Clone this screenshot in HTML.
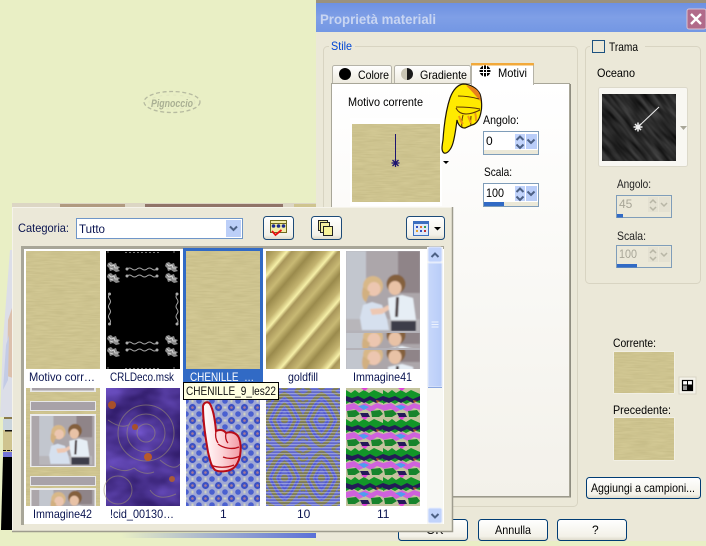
<!DOCTYPE html>
<html><head><meta charset="utf-8"><title>Proprietà materiali</title>
<style>
html,body{margin:0;padding:0;background:#e9efc5;width:706px;height:546px;overflow:hidden}
svg{display:block;position:absolute;left:0;top:0}
text{font-family:"Liberation Sans",sans-serif;font-size:12px;fill:#000;white-space:pre}
.n{fill:#0a1450}
</style></head><body>
<svg width="706" height="546" viewBox="0 0 706 546" xmlns="http://www.w3.org/2000/svg">
<defs>
<filter id="grain" x="0" y="0" width="100%" height="100%" color-interpolation-filters="sRGB">
<feTurbulence type="fractalNoise" baseFrequency="0.06 0.7" numOctaves="2" seed="3"/>
<feColorMatrix type="matrix" values=".08 0 0 0 .765  .08 0 0 0 .725  .08 0 0 0 .52  0 0 0 0 1"/>
</filter>
<filter id="dark" x="0" y="0" width="100%" height="100%" color-interpolation-filters="sRGB">
<feTurbulence type="fractalNoise" baseFrequency="0.035 0.2" numOctaves="2" seed="5"/>
<feColorMatrix type="matrix" values=".32 0 0 0 0  .32 0 0 0 0  .32 0 0 0 0  0 0 0 0 1"/>
</filter>
<filter id="purple" x="0" y="0" width="100%" height="100%" color-interpolation-filters="sRGB">
<feTurbulence type="fractalNoise" baseFrequency="0.025 0.04" numOctaves="3" seed="8"/>
<feColorMatrix type="matrix" values=".4 0 0 0 .1  .35 0 0 0 .03  .6 0 0 0 .28  0 0 0 0 1"/>
</filter>
<filter id="photo" x="0" y="0" width="100%" height="100%"><feGaussianBlur stdDeviation="0.8"/></filter>
<linearGradient id="title" x1="0" x2="0" y1="0" y2="1"><stop offset="0" stop-color="#6d90e2"/><stop offset=".5" stop-color="#7f9fe6"/><stop offset="1" stop-color="#7397e4"/></linearGradient>
<linearGradient id="page" x1="0" x2="0" y1="0" y2="1"><stop offset="0" stop-color="#ffffff"/><stop offset="1" stop-color="#f3f1ea"/></linearGradient>
<linearGradient id="btn" x1="0" x2="0" y1="0" y2="1"><stop offset="0" stop-color="#ffffff"/><stop offset=".8" stop-color="#f3f1e8"/><stop offset="1" stop-color="#dcd8c8"/></linearGradient>
<linearGradient id="tab" x1="0" x2="0" y1="0" y2="1"><stop offset="0" stop-color="#ffffff"/><stop offset="1" stop-color="#ece9dc"/></linearGradient>
<linearGradient id="sb" x1="0" x2="1" y1="0" y2="0"><stop offset="0" stop-color="#c8d8fb"/><stop offset="1" stop-color="#b8ccf8"/></linearGradient>
<linearGradient id="gold" gradientUnits="userSpaceOnUse" x1="266" y1="251" x2="293" y2="274" spreadMethod="repeat">
<stop offset="0" stop-color="#9a8a4c"/><stop offset=".3" stop-color="#c4b470"/><stop offset=".46" stop-color="#f6f0a8"/><stop offset=".56" stop-color="#a8965a"/><stop offset=".8" stop-color="#c8b974"/><stop offset="1" stop-color="#9a8a4c"/></linearGradient>
<linearGradient id="bl" x1="0" x2="1" y1="0" y2="0"><stop offset="0" stop-color="#e9efc5"/><stop offset="1" stop-color="#5a70d8"/></linearGradient>
<linearGradient id="pink" x1="0" x2="1" y1="0" y2="0"><stop offset="0" stop-color="#ffffff"/><stop offset=".5" stop-color="#fcd4d8"/><stop offset="1" stop-color="#f29aa4"/></linearGradient>
<pattern id="pblue" patternUnits="userSpaceOnUse" x="186" y="388" width="13" height="13">
<rect width="13" height="13" fill="#a0a8d4"/>
<circle cx="6.500" cy="6.500" r="3.500" fill="#3a50c4"/><circle cx="6.500" cy="6.500" r="1.300" fill="#a87a98"/>
<circle cx="0" cy="0" r="2.800" fill="#4a60d0"/><circle cx="13" cy="0" r="2.800" fill="#4a60d0"/><circle cx="0" cy="13" r="2.800" fill="#4a60d0"/><circle cx="13" cy="13" r="2.800" fill="#4a60d0"/>
<path d="M6.500 0v1.500M0 6.500h1.500M11.500 6.500h1.500M6.500 11.500v1.500" stroke="#cfd2c0" stroke-width="2"/>
</pattern>
<pattern id="pwave" patternUnits="userSpaceOnUse" x="266" y="391" width="37" height="58">
<rect width="37" height="58" fill="#6e76d6"/>
<g fill="none">
<path d="M0 29C8 12 12 6 18.500 3 25 6 29 12 37 29 29 46 25 52 18.500 55 12 52 8 46 0 29Z" stroke="#8a8852" stroke-width="4"/>
<path d="M4.500 29C10 16 14 10 18.500 8 23 10 27 16 32.500 29 27 42 23 48 18.500 50 14 48 10 42 4.500 29Z" stroke="#5a62dc" stroke-width="1.500"/>
<path d="M8 29C12 20 15 15 18.500 13 22 15 25 20 29 29 25 38 22 43 18.500 45 15 43 12 38 8 29Z" stroke="#8a8852" stroke-width="3"/>
<path d="M12 29C14 24 16 21 18.500 18 21 21 23 24 25 29 23 34 21 37 18.500 40 16 37 14 34 12 29Z" stroke="#5a62dc" stroke-width="1.500"/>
<path d="M0 5L8 0M37 5L29 0M0 53L8 58M37 53L29 58" stroke="#8a8852" stroke-width="3"/>
<path d="M0 12L5 9M37 12L32 9M0 46L5 49M37 46L32 49M0 18L2 16M37 18L35 16M0 40L2 42M37 40L35 42" stroke="#8a8852" stroke-width="2.500"/>
</g>
<circle cx="18.500" cy="29" r="3.500" fill="#8a8852"/>
</pattern>
<pattern id="pstripe" patternUnits="userSpaceOnUse" x="0" y="0" width="4" height="3">
<rect width="4" height="1" fill="#c8cce8" opacity=".45"/>
<rect y="2" width="4" height="1" fill="#30309a" opacity=".22"/>
</pattern>
<pattern id="pmix" patternUnits="userSpaceOnUse" x="346" y="388" width="37" height="29">
<rect width="37" height="29" fill="#c4c49e"/>
<path d="M0 2l5 3 4-3 4 3 5-3 5 3 5-3 9 4v9l-8-2-6 3-6-3-5 3-6-3-6 3Z" fill="#129628"/>
<path d="M0 8l6 2 6-2 6 3 6-3 6 3 7-3v4l-7 3-6-3-6 3-6-3-6 3-6-2Z" fill="#241a58"/>
<path d="M0 17l8-2 5 3 6-3 6 3 6-3 6 2v5l-6-2-6 4-6-3-6 3-5-3-8 2Z" fill="#cf62dc"/>
<path d="M12 18l6-1 5 2-5 3Z" fill="#4f9cf0"/>
<path d="M1 23l9-1 4 4-5 3H2ZM25 23l9-1 3 4-4 3h-7Z" fill="#17842c"/>
<path d="M14 25l8 0 2 4h-8Z" fill="#241a58"/>
<path d="M15 0h7l-3 3Z" fill="#e040d8"/>
<path d="M30 12l4 1-3 2Z" fill="#a8582a"/>
</pattern>
<clipPath id="cDark"><rect x="602" y="94" width="74" height="67"/></clipPath>
<clipPath id="c41a"><rect x="346" y="251" width="74" height="80"/></clipPath>
<clipPath id="c41b"><rect x="346" y="333" width="74" height="15"/></clipPath>
<clipPath id="c41c"><rect x="346" y="350" width="74" height="19"/></clipPath>
<clipPath id="cFrame"><rect x="31" y="416" width="64" height="50"/></clipPath>
<clipPath id="cFrame2"><rect x="31" y="490" width="64" height="16"/></clipPath>
<g id="kids" filter="url(#photo)">
<rect x="0" y="0" width="74" height="80" fill="#aca6aa"/>
<rect x="0" y="0" width="20" height="80" fill="#c2c6ce"/>
<rect x="52" y="0" width="22" height="42" fill="#8f8488"/>
<rect x="0" y="68" width="74" height="12" fill="#b8b6ba"/>
<circle cx="27" cy="35" r="10" fill="#d8b888"/>
<ellipse cx="28" cy="38" rx="6.500" ry="7" fill="#ecc6b0"/>
<path d="M17 36c-2 7-1 13 3 15l4-10Z" fill="#d2b080"/>
<circle cx="50" cy="33" r="9.500" fill="#84603e"/>
<ellipse cx="49" cy="37" rx="6.500" ry="7" fill="#e8c2a6"/>
<path d="M17 54l9-3 10 3 5 14 2 11H16l-2-12Z" fill="#d6e0ee"/>
<path d="M24 58l13-1 5-3 2 4-8 5-10 1Z" fill="#eec8b2"/>
<path d="M42 47l14-3 11 3 3 22H45l-2-10Z" fill="#e6eef5"/>
<path d="M50 46l3 0-1 20-3 0Z" fill="#4a3c40"/>
<rect x="45" y="70" width="25" height="10" fill="#3c3c4a"/>
</g>
<g id="blob"><path d="M0 0l3-1 2 2 3-1 1 3 3 1-2 2 2 2-4 1-3-2-3 1-1-3-2-2Z" fill="#8c8c8c"/><path d="M1 1l2 2 3-1 1 3 3 0M2 5l3 1" fill="none" stroke="#e0e0e0" stroke-width=".8"/></g>
<g id="wave"><path d="M0 0q2.500-2 5 0t5 0 5 0 5 0 5 0 5 0" fill="none" stroke="#a8a8a8" stroke-width="1"/><circle cx="0" cy="0" r="1.500" fill="#aaa"/><circle cx="30" cy="0" r="1.500" fill="#aaa"/></g>
<g id="vw"><path d="M0 0q-2 2.500 0 5t0 5 0 5 0 5 0 5 0 5" fill="none" stroke="#a8a8a8" stroke-width="1"/><circle cx="0" cy="0" r="1.500" fill="#aaa"/><circle cx="0" cy="30" r="1.500" fill="#aaa"/></g>
<g id="up"><path d="M-3.500 2L0-1.500 3.500 2" fill="none" stroke="#4d6185" stroke-width="2"/></g>
<g id="dn"><path d="M-3.500-1.500L0 2 3.500-1.500" fill="none" stroke="#4d6185" stroke-width="2"/></g>
</defs>

<rect width="706" height="546" fill="#e9efc5"/>

<!-- watermark -->
<g fill="none"><ellipse cx="172" cy="102" rx="28" ry="10.500" stroke="#b6baa0" stroke-width="1.300" stroke-dasharray="4 2.600"/><ellipse cx="172" cy="102" rx="23" ry="7" stroke="#e0e5c0" stroke-width="1" stroke-dasharray="3 4"/></g>
<text x="151" y="107" font-style="italic" font-weight="bold" textLength="42" lengthAdjust="spacingAndGlyphs" style="font-size:11px;fill:#aab094">Pignoccio</text>

<!-- left strip -->
<polygon points="10,250 13,250 13,417 0,417 3,340" fill="#dcdee8"/>
<polygon points="8,320 13,305 13,378 7,376" fill="#dcc0ac"/>
<polygon points="6,345 9,335 8,380 3,390" fill="#c4cce6"/>
<rect x="4" y="417" width="9" height="2" fill="#8a7a4a"/>
<rect x="3" y="419" width="10" height="11" fill="#c9d4dc"/>
<rect x="3" y="430" width="10" height="22" fill="#cfc48f"/>
<rect x="5" y="430" width="8" height="1.500" fill="#111"/>
<path d="M3 450.500h3M7 450.500h3M11 450.500h2" stroke="#000" stroke-width="1"/>
<rect x="3" y="452" width="10" height="5" fill="#7474d8"/>
<polygon points="3,457 13,457 13,530 1,530" fill="#000"/>
<!-- top strip -->
<rect x="12" y="203" width="304" height="5" fill="#dcd6c4"/>
<rect x="60" y="204" width="65" height="4" fill="#b09a80"/>
<rect x="145" y="204" width="138" height="4" fill="#907468"/>
<rect x="294" y="204" width="22" height="4" fill="#cfc48f"/>
<!-- blue line under popup -->
<rect x="120" y="533" width="196" height="5" fill="url(#bl)"/>

<!-- dialog -->
<rect x="316" y="1" width="390" height="540" fill="#ebe8d8"/>
<rect x="316" y="0" width="390" height="3" fill="#9a917e"/>
<rect x="316" y="3" width="390" height="29" fill="url(#title)"/>
<text x="320" y="24" font-weight="bold" textLength="116" lengthAdjust="spacingAndGlyphs" style="font-size:14px;fill:#c8d5f2">Proprietà materiali</text>
<rect x="687" y="9" width="19" height="20" rx="2" fill="#b16b8a" stroke="#d8c2d0"/>
<path d="M691 14l10 10M701 14l-10 10" stroke="#fff" stroke-width="2.400"/>

<!-- Stile group -->
<rect x="323.500" y="46.500" width="254" height="460" rx="4" fill="none" stroke="#d8d4c2"/>
<rect x="329" y="42" width="26" height="10" fill="#ebe8d8"/>
<text x="331" y="50" textLength="21" lengthAdjust="spacingAndGlyphs" style="fill:#0046d5">Stile</text>

<!-- tabs -->
<rect x="332.500" y="65.500" width="59" height="19" rx="2" fill="url(#tab)" stroke="#b5b3a8"/>
<circle cx="345" cy="74" r="6" fill="#000"/>
<text x="358" y="79" textLength="31" lengthAdjust="spacingAndGlyphs">Colore</text>
<rect x="394.500" y="65.500" width="76" height="19" rx="2" fill="url(#tab)" stroke="#b5b3a8"/>
<path d="M407 68a6 6 0 0 1 0 12Z" fill="#1a1a1a"/><path d="M407 68a6 6 0 0 0 0 12Z" fill="#c8c4b4"/>
<text x="420" y="79" textLength="47" lengthAdjust="spacingAndGlyphs">Gradiente</text>
<rect x="331.500" y="83.500" width="238" height="413" fill="url(#page)" stroke="#a8a698"/>
<path d="M570.500 84v413h-239" fill="none" stroke="#8f8d80"/>
<rect x="471.500" y="63.500" width="62" height="21" fill="#fff" stroke="#b5b3a8"/>
<rect x="472" y="84" width="61" height="2" fill="#fff"/>
<rect x="471" y="63" width="63" height="2.500" rx="1" fill="#f2a93a"/>
<g fill="#000"><circle cx="485" cy="71" r="5.500"/></g>
<path d="M479 69.500h12M479 72.500h12M483.500 65v12M486.500 65v12" stroke="#fff" stroke-width="1"/>
<text x="498" y="77" textLength="29" lengthAdjust="spacingAndGlyphs">Motivi</text>

<text x="348" y="106" textLength="75" lengthAdjust="spacingAndGlyphs">Motivo corrente</text>
<rect x="350" y="118" width="92" height="88" fill="#fff"/>
<rect x="352" y="124" width="88" height="78" filter="url(#grain)"/>
<path d="M395.500 134v29" stroke="#1d1470"/>
<path d="M391.500 163h8M395.500 159v8M392.500 160l6 6M398.500 160l-6 6" stroke="#1d1470" stroke-width="1.300"/>
<path d="M443 161h6l-3 3Z" fill="#000"/>

<!-- Angolo / Scala -->
<text x="483" y="124" textLength="36" lengthAdjust="spacingAndGlyphs">Angolo:</text>
<rect x="483.500" y="131.500" width="55" height="23" fill="#fff" stroke="#7f9db9"/>
<rect x="484" y="150" width="54" height="4" fill="#ebe8d8"/>
<text x="486" y="145">0</text>
<rect x="515" y="134" width="10" height="15" fill="#c1d3fb"/><rect x="526" y="134" width="11" height="15" fill="#b9cdf8"/>
<use href="#up" x="520" y="138"/><use href="#dn" x="520" y="146"/><use href="#dn" x="531" y="141"/>
<text x="484" y="176" textLength="28" lengthAdjust="spacingAndGlyphs">Scala:</text>
<rect x="483.500" y="183.500" width="55" height="23" fill="#fff" stroke="#7f9db9"/>
<rect x="484" y="202" width="54" height="4" fill="#ebe8d8"/>
<rect x="484" y="202" width="20" height="4" fill="#316ac5"/>
<text x="486" y="197" textLength="18" lengthAdjust="spacingAndGlyphs">100</text>
<rect x="515" y="186" width="10" height="15" fill="#c1d3fb"/><rect x="526" y="186" width="11" height="15" fill="#b9cdf8"/>
<use href="#up" x="520" y="190"/><use href="#dn" x="520" y="198"/><use href="#dn" x="531" y="193"/>

<!-- Trama -->
<rect x="585.500" y="46.500" width="115" height="237" rx="4" fill="none" stroke="#d8d4c2"/>
<rect x="590" y="40" width="55" height="14" fill="#ebe8d8"/>
<rect x="592.500" y="40.500" width="12" height="12" fill="#ebe8d8" stroke="#1c5180"/>
<text x="609" y="51" textLength="29" lengthAdjust="spacingAndGlyphs">Trama</text>
<text x="597" y="77" textLength="38" lengthAdjust="spacingAndGlyphs">Oceano</text>
<rect x="598.500" y="87.500" width="89" height="79" rx="2" fill="#f8f7f2" stroke="#dcd9ca"/>
<g clip-path="url(#cDark)"><rect x="570" y="60" width="140" height="140" filter="url(#dark)" transform="rotate(50 639 127)"/></g>
<path d="M638 127l21-20" stroke="#f0f0f0" stroke-width="1"/>
<path d="M633.500 127h9M638 122.500v9M635 124l6 6M641 124l-6 6" stroke="#f0f0f0" stroke-width="1.500"/>
<path d="M680 126h7l-3.500 4Z" fill="#a8a698"/>

<text x="617" y="188" textLength="34" lengthAdjust="spacingAndGlyphs" style="fill:#222">Angolo:</text>
<rect x="616.500" y="195.500" width="55" height="22" fill="#ebe8d8" stroke="#7f9db9"/>
<rect x="617" y="214" width="6" height="3.500" fill="#316ac5"/>
<text x="619" y="208" style="fill:#a8a698">45</text>
<rect x="648" y="197" width="10" height="15" fill="#e4e1d2"/><rect x="659" y="197" width="11" height="15" fill="#e4e1d2"/>
<path d="M650 203l3-3 3 3M650 207l3 3 3-3M661 203l3 3 3-3" fill="none" stroke="#b8b6a6" stroke-width="1.500"/>
<text x="617" y="240" textLength="29" lengthAdjust="spacingAndGlyphs" style="fill:#222">Scala:</text>
<rect x="616.500" y="245.500" width="55" height="22" fill="#ebe8d8" stroke="#7f9db9"/>
<rect x="617" y="264" width="20" height="3.500" fill="#316ac5"/>
<text x="619" y="258" textLength="18" lengthAdjust="spacingAndGlyphs" style="fill:#a8a698">100</text>
<rect x="648" y="247" width="10" height="15" fill="#e4e1d2"/><rect x="659" y="247" width="11" height="15" fill="#e4e1d2"/>
<path d="M650 253l3-3 3 3M650 257l3 3 3-3M661 253l3 3 3-3" fill="none" stroke="#b8b6a6" stroke-width="1.500"/>

<!-- Corrente -->
<text x="613" y="347" textLength="43" lengthAdjust="spacingAndGlyphs">Corrente:</text>
<rect x="613.500" y="351.500" width="61" height="42" fill="#f7f6f0"/>
<rect x="614" y="352" width="60" height="41" filter="url(#grain)"/>
<rect x="679" y="377" width="17" height="17" fill="#f5f3ea" stroke="#d8d4c4"/>
<rect x="682.500" y="380.500" width="10" height="10" fill="#fff" stroke="#000" stroke-width="1.200"/>
<rect x="687" y="385" width="5" height="5" fill="#000"/><rect x="683" y="385" width="4" height="5" fill="#999"/><path d="M687.500 380v10M682 385h10" stroke="#000"/>
<text x="613" y="414" textLength="58" lengthAdjust="spacingAndGlyphs">Precedente:</text>
<rect x="613.500" y="417.500" width="61" height="43" fill="#f7f6f0"/>
<rect x="614" y="418" width="60" height="42" filter="url(#grain)"/>

<!-- buttons -->
<rect x="586.500" y="477.500" width="114" height="21" rx="3" fill="url(#btn)" stroke="#003c74"/>
<text x="591" y="492" textLength="104" lengthAdjust="spacingAndGlyphs">Aggiungi a campioni...</text>
<rect x="398.500" y="519.500" width="69" height="21" rx="3" fill="url(#btn)" stroke="#003c74"/>
<text x="426" y="534">OK</text>
<rect x="478.500" y="519.500" width="69" height="21" rx="3" fill="url(#btn)" stroke="#003c74"/>
<text x="495" y="534" textLength="36" lengthAdjust="spacingAndGlyphs">Annulla</text>
<rect x="557.500" y="519.500" width="69" height="21" rx="3" fill="url(#btn)" stroke="#003c74"/>
<text x="592" y="534">?</text>

<!-- popup -->
<rect x="12" y="207" width="441" height="325" fill="#ebe8d8"/>
<path d="M12.500 532V207.500H453" fill="none" stroke="#f5f3ea"/>
<path d="M452.500 207v324.500H12" fill="none" stroke="#9e9c8e" stroke-width="1.500"/>
<rect x="21" y="246" width="423" height="3" fill="#a8a698"/>
<rect x="21" y="246" width="3" height="279" fill="#a8a698"/>
<rect x="24" y="249" width="420" height="275" fill="#fff"/>

<text x="18" y="232" class="n" textLength="51" lengthAdjust="spacingAndGlyphs">Categoria:</text>
<rect x="76.500" y="218.500" width="166" height="20" fill="#fff" stroke="#6f96c8"/>
<text x="79" y="233" class="n" textLength="26" lengthAdjust="spacingAndGlyphs">Tutto</text>
<rect x="226" y="220" width="15" height="17" fill="#bccff8"/>
<use href="#dn" x="233.500" y="228"/>

<rect x="263.500" y="216.500" width="30" height="23" rx="3" fill="url(#btn)" stroke="#1c4a78"/>
<rect x="270.500" y="220.500" width="16" height="12" fill="#f2eda8" stroke="#6f6a20"/>
<path d="M271 223.500h15" stroke="#6f6a20"/>
<circle cx="273.500" cy="226" r="1.800" fill="#1a2a90"/><circle cx="278.500" cy="226" r="1.800" fill="#1a2a90"/><circle cx="283.500" cy="226" r="1.800" fill="#1a2a90"/>
<path d="M272 231l3.500 4 6-5" fill="none" stroke="#e81010" stroke-width="1.800"/>
<rect x="311.500" y="216.500" width="30" height="23" rx="3" fill="url(#btn)" stroke="#1c4a78"/>
<rect x="318.500" y="220.500" width="9" height="10" fill="#f4eda0" stroke="#222"/>
<rect x="320.500" y="222.500" width="9" height="10" fill="#f4eda0" stroke="#222"/>
<rect x="323.500" y="226.500" width="9" height="9" fill="#f8f29a" stroke="#222"/>
<rect x="406.500" y="216.500" width="38" height="23" rx="3" fill="url(#btn)" stroke="#1c4a78"/>
<rect x="413.500" y="221.500" width="15" height="14" fill="#dfe8f8" stroke="#3b6fc0"/>
<rect x="414" y="222" width="14" height="2" fill="#3b6fc0"/>
<rect x="416" y="226" width="2" height="2" fill="#3050c0"/><rect x="420" y="226" width="2" height="2" fill="#e07030"/><rect x="424" y="226" width="2" height="2" fill="#30a050"/>
<rect x="416" y="230" width="2" height="2" fill="#e0a030"/><rect x="420" y="230" width="2" height="2" fill="#3050c0"/><rect x="424" y="230" width="2" height="2" fill="#c03030"/>
<path d="M434 227h7l-3.500 3.500Z" fill="#000"/>

<!-- Row 1 thumbs -->
<rect x="26" y="251" width="74" height="118" filter="url(#grain)"/>
<rect x="106" y="251" width="74" height="118" fill="#000"/>
<use href="#blob" x="108" y="263"/><use href="#blob" x="108" y="274"/>
<use href="#blob" x="166" y="263"/><use href="#blob" x="166" y="274"/>
<use href="#blob" x="108" y="336"/><use href="#blob" x="108" y="348"/>
<use href="#blob" x="166" y="336"/><use href="#blob" x="166" y="348"/>
<use href="#wave" x="127" y="269"/><use href="#wave" x="127" y="276"/>
<use href="#wave" x="127" y="343"/><use href="#wave" x="127" y="350"/>
<use href="#vw" x="109.500" y="294"/><use href="#vw" x="177" y="294"/>
<path d="M107 252h3M125 252.500h35M173 252h3M107 368h3M125 368.500h35M173 368h3" stroke="#777" stroke-dasharray="2 2"/>

<rect x="183" y="248" width="80" height="134" fill="#316ac5"/>
<rect x="186" y="251" width="74" height="118" filter="url(#grain)"/>

<rect x="266" y="251" width="74" height="118" fill="url(#gold)"/>

<rect x="346" y="251" width="74" height="118" fill="#b4b2b8"/>
<g clip-path="url(#c41a)"><use href="#kids" x="346" y="251"/></g>
<g clip-path="url(#c41b)"><use href="#kids" x="346" y="302"/></g>
<g clip-path="url(#c41c)"><use href="#kids" x="346" y="320"/></g>

<text x="29" y="381" class="n" textLength="66" lengthAdjust="spacingAndGlyphs">Motivo corr…</text>
<text x="110" y="381" class="n" textLength="64" lengthAdjust="spacingAndGlyphs">CRLDeco.msk</text>
<text x="190" y="381" textLength="64" lengthAdjust="spacingAndGlyphs" style="fill:#fff">CHENILLE  …</text>
<text x="288" y="381" class="n" textLength="30" lengthAdjust="spacingAndGlyphs">goldfill</text>
<text x="353" y="381" class="n" textLength="59" lengthAdjust="spacingAndGlyphs">Immagine41</text>

<!-- Row 2 thumbs -->
<rect x="26" y="388" width="74" height="118" filter="url(#grain)"/>
<rect x="30" y="388" width="66" height="4" fill="#e8e8e8"/><rect x="32" y="388" width="62" height="2.500" fill="#a8a2a8"/>
<rect x="30.500" y="401.500" width="65" height="9" fill="#a8a2a8" stroke="#e8e8e8"/>
<rect x="30" y="414" width="66" height="53" fill="#ececec"/>
<rect x="31.500" y="416" width="63" height="50" fill="#aca6aa"/>
<g clip-path="url(#cFrame)"><use href="#kids" transform="translate(39 407) scale(.72)"/></g>
<rect x="30.500" y="476.500" width="65" height="9" fill="#a8a2a8" stroke="#e8e8e8"/>
<rect x="30" y="488" width="66" height="18" fill="#ececec"/>
<rect x="31.500" y="490" width="63" height="16" fill="#aca6aa"/>
<g clip-path="url(#cFrame2)"><use href="#kids" transform="translate(39 474) scale(.72)"/></g>
<rect x="106" y="388" width="74" height="118" filter="url(#purple)"/>
<g fill="none" stroke="#a09470" stroke-width="1" opacity=".55">
<circle cx="146" cy="433" r="9"/><circle cx="146" cy="433" r="19"/><circle cx="146" cy="433" r="28"/>
<circle cx="118" cy="490" r="14"/><path d="M108 420q14 10 22 4M160 460q14 12 20 4M110 466q14 8 24 2q10 8 20 4M150 490q8 12 26 4"/>
</g>
<circle cx="112" cy="405" r="4" fill="#a8502a"/><circle cx="135" cy="427" r="3" fill="#a8502a"/><circle cx="148" cy="457" r="4" fill="#b85a2a"/><circle cx="172" cy="479" r="3" fill="#a85a3a"/>
<rect x="186" y="388" width="74" height="118" fill="url(#pblue)"/>
<rect x="266" y="388" width="74" height="118" fill="url(#pwave)"/>
<rect x="266" y="388" width="74" height="118" fill="url(#pstripe)"/>
<rect x="346" y="388" width="74" height="118" fill="url(#pmix)"/>

<text x="33" y="518" class="n" textLength="59" lengthAdjust="spacingAndGlyphs">Immagine42</text>
<text x="110" y="518" class="n" textLength="64" lengthAdjust="spacingAndGlyphs">!cid_00130…</text>
<text x="220" y="518" class="n">1</text>
<text x="297" y="518" class="n">10</text>
<text x="377" y="518" class="n">11</text>

<!-- tooltip -->
<rect x="183.500" y="382.500" width="95" height="17" fill="#ffffe1" stroke="#000"/>
<text x="186" y="395" textLength="90" lengthAdjust="spacingAndGlyphs" style="fill:#111">CHENILLE_9_les22</text>

<!-- scrollbar -->
<rect x="427" y="247" width="16" height="277" fill="#f8f8f4"/>
<rect x="428" y="247" width="14" height="15" rx="2" fill="#c1d3fb" stroke="#e8eefc"/>
<use href="#up" x="435" y="255"/>
<rect x="428" y="263" width="14" height="124" rx="1" fill="url(#sb)" stroke="#e4ecfc"/>
<path d="M431.500 322h7M431.500 324.500h7M431.500 327h7" stroke="#eef3fd"/>
<path d="M428 387.500h14" stroke="#8ca8e0"/>
<rect x="428" y="508" width="14" height="15" rx="2" fill="#c1d3fb" stroke="#e8eefc"/>
<use href="#dn" x="435" y="515.500"/>

<!-- yellow hand -->
<path d="M463 84C470 84 477 88 480 94 482 100 482 108 481 112 480 118 477 124 472 125L465 128C461 128 458 125 457 120 456 128 455 136 453 143 451 150 447 154 444 153 441 151 442 146 443 140 444 125 446 110 450 98 453 90 457 85 463 84Z" fill="#ffea00" stroke="#1c1408" stroke-width="1.200"/>
<path d="M466 85.500C472 86 478 89 480 95L481 102C476 96 471 90 466 85.500Z" fill="#e8801c"/>
<path d="M458 96C465 96 472 97 479 99M456 107c7 0 15 0 24 2M456 108c2 4 5 6 10 6 5 0 10-2 14-4M462 127c-1-4 0-8 1-12M471 125c-1-3 0-6 0-9" fill="none" stroke="#5a3208" stroke-width="1"/>
<path d="M459 116c1 3 2 6 4 8M468 116c1 2 2 5 3 7M475 113c1 2 1 5 1 8" fill="none" stroke="#f09818" stroke-width="2"/>

<!-- red hand -->
<path d="M203 406C204 402 208 401 210 404 213 409 215 420 216 431 220 429 224 430 226 433 231 431 237 433 239 438 241 443 241 450 240 456 239 461 236 467 232 469 227 472 219 472 215 470 211 466 210 460 208 452 206 440 203 424 203 406Z" fill="url(#pink)" stroke="#b80c18" stroke-width="2"/>
<path d="M216 431c-1 5 0 9 2 12M226 433c-1 4 0 8 2 10M239 447c-7 3-16 1-21-3M240 456c-6 3-12 3-17 1M211 465c6 3 16 3 23 0" fill="none" stroke="#b80c18" stroke-width="1.300"/>
</svg>
</body></html>
